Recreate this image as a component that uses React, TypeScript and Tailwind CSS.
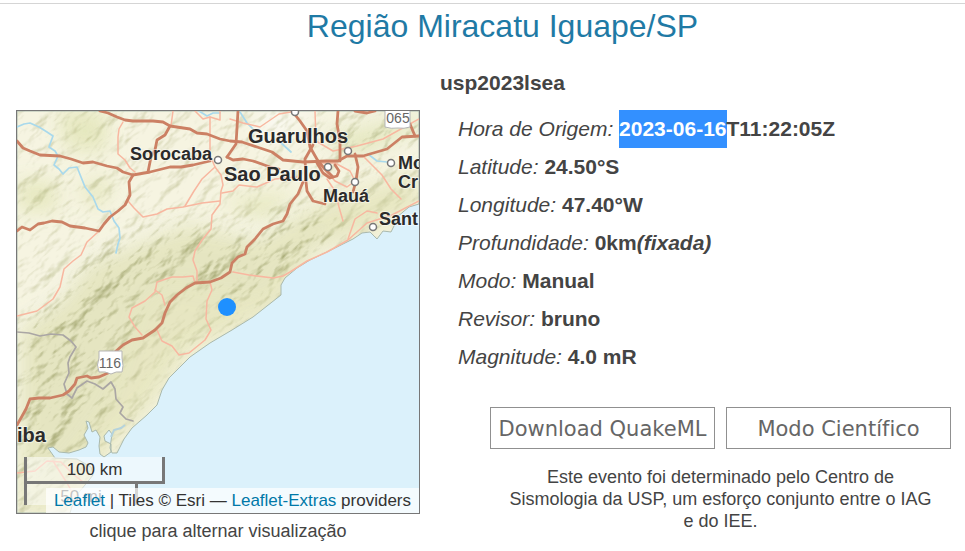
const MAIN_ROADS = [
  "M83 0L91 2L100 6L108 9L116 10L136 10L146 11L153 15L173 18L180 22L190 23L203 28L213 30L225 31L240 36L255 41L266 49L286 51L310 50L321 50L330 45L346 45L370 38L385 26L402 25",
  "M0 30L6 37L13 40L23 44L43 45L54 48L66 52L76 51L90 55L100 57L106 61L116 64L133 61L153 56L164 56L176 54L193 50",
  "M210 46L216 49L226 48L236 50L253 56L262 58",
  "M153 15L148 24L140 29L138 39L134 46L131 61",
  "M116 64L112 71L113 84L108 94L101 100L93 106L87 113L82 120L68 117L53 115L45 111L35 110L27 112L21 113L13 119L5 116L0 120",
  "M221 0L220 17L219 33L210 46",
  "M275 0L283 10L290 20L293 36L301 50L308 58L316 66",
  "M321 0L320 13L323 30L323 50",
  "M296 34L288 48L289 71L290 80L296 90L308 93",
  "M286 71L281 83L273 93L270 103L266 110L256 113L246 118L238 128L230 136L228 143L221 146L215 152L213 161L204 167L193 171L178 172L169 177L160 184L153 191L148 202L145 212L138 219L126 227L115 229L106 234L98 241",
  "M91 262L82 266L74 267L70 265L60 267L58 273L52 280L46 284L33 287L22 287L13 288L9 298L0 314",
  "M300 52L306 62L313 67L320 65L322 60L318 54",
  "M338 43L341 56L339 70L336 81",
  "M338 0L350 2L358 0M393 13L398 25",
];

const MINOR_ROADS = [
  "M156 0L154 15",
  "M106 11L102 18L101 26L101 43L108 49L113 57L118 61",
  "M111 90L117 97L126 106L140 103L150 98L166 96L185 92L203 90",
  "M168 95L177 80L185 68L198 56L193 44V6L186 8L178 0",
  "M193 6L203 9L203 0M198 56L204 64L206 74L204 80L203 93L195 104L194 118L185 129L178 140L176 149L180 160L180 172",
  "M81 121L70 131L64 144L56 150L47 158L43 176L36 188L20 200L0 205",
  "M178 172L176 165L166 166L155 166L140 171L138 181L128 190L115 197L112 206L118 216L125 224",
  "M138 179L145 184L148 194",
  "M140 219L145 230L155 235L162 244L172 242L188 229L194 219L189 208L190 190L195 179L193 171",
  "M216 161L232 164L256 167L266 165L273 161L290 150L310 141L331 129L350 112L375 104L402 90",
  "M310 68L318 80L322 96L326 110M331 128L338 108L350 100L360 102",
  "M213 8L226 12L243 16L262 3L280 0",
  "M205 82L216 80L222 74L240 76L258 68L280 66",
  "M298 0L299 30L316 40L340 35L366 28L402 8",
  "M301 52L318 70L330 76L338 70L333 60L318 52L301 52",
  "M346 45L365 64L374 78L384 88",
  "M0 362L18 360L30 350L44 351L56 363L66 371M36 350L50 372L60 390",
];

const RIVERS = [
  "M0 16L7 13L13 12L22 16L30 21L36 25L32 36L38 40L41 45L37 54L42 58L46 63L52 57L60 56L64 66L68 76L76 86L81 98L86 101L93 100L97 110L102 117L103 127L101 133L99 142",
  "M223 1L230 12L236 18M262 30L274 41",
  "M351 43L360 50L370 51",
  "M182 0L190 5L196 2L203 2",
];

const LAND =
  "M0 0H402V93L392 96L380 106L378 113L374 121L366 120L360 128L353 121L345 122L336 128L312 140L293 149L280 157L268 167L264 174L264 184L250 195L236 206L215 219L193 232L173 246L162 257L152 267L145 279L140 294L130 304L115 317L107 328L100 342L95 342L93 337L95 323L92 319L87 325L88 330L94 333L94 341L87 346L83 343L82 335L83 326L79 319L75 321L72 311L69 310L71 317L67 324L71 332L69 336L62 339L52 342L42 341L36 336L31 337L38 347L60 348L74 356L76 364L68 374L58 386L53 402H0Z";

const CITIES = [
  [278, 1],
  [201, 49],
  [311, 56],
  [331, 40],
  [374, 52],
  [338, 71],
  [356, 116],
];

const LABELS = [
  { x: 113, y: 49, size: 18, text: "Sorocaba" },
  { x: 231, y: 32, size: 20, text: "Guarulhos" },
  { x: 207, y: 70, size: 20, text: "Sao Paulo" },
  { x: 306, y: 91, size: 18, text: "Mauá" },
  { x: 381, y: 58, size: 18, text: "Mo" },
  { x: 381, y: 77, size: 18, text: "Cr" },
  { x: 362, y: 114, size: 18, text: "Sant" },
  { x: 0, y: 331, size: 20, text: "iba" },
];

function TerrainMap() {
  return (
    <svg
      viewBox="0 0 402 402"
      className="block h-full w-full"
      role="img"
      aria-label="Mapa da região do evento"
    >
      <defs>
        <clipPath id="land">
          <path d={LAND} />
        </clipPath>
        <filter id="soften" x="-20%" y="-20%" width="140%" height="140%">
          <feGaussianBlur stdDeviation="10" />
        </filter>
        <filter id="relief" x="0" y="0" width="100%" height="100%" colorInterpolationFilters="sRGB">
          <feTurbulence type="fractalNoise" baseFrequency="0.03 0.06" numOctaves="4" seed="7" />
          <feDiffuseLighting surfaceScale="5" diffuseConstant="1.18" lightingColor="#fff">
            <feDistantLight azimuth="250" elevation="60" />
          </feDiffuseLighting>
          <feComponentTransfer>
            <feFuncR type="linear" slope="0.42" intercept="0.57" />
            <feFuncG type="linear" slope="0.4" intercept="0.59" />
            <feFuncB type="linear" slope="0.6" intercept="0.38" />
          </feComponentTransfer>
          <feGaussianBlur stdDeviation="0.6" />
        </filter>
        <mask id="mountains" maskUnits="userSpaceOnUse" x="0" y="0" width="402" height="402">
          <rect width="402" height="402" fill="#777" />
          <path
            d="M0 215L40 190L70 150L120 128L160 115L230 122L270 100L330 108L300 142L262 160L255 185L200 180L150 172L120 200L110 235L90 290L60 330L0 402Z"
            fill="#fff"
            filter="url(#soften)"
          />
          <path d="M300 28L402 0V20L340 50Z M240 0H300L250 30Z" fill="#ddd" filter="url(#soften)" />
        </mask>
      </defs>

      <rect width="402" height="402" fill="#dbf1fb" />
      <path d={LAND} fill="#f0edcd" />
      <g clipPath="url(#land)">
        <path
          d="M0 215L40 190L70 150L130 125L170 110L240 125L280 100L402 60V100L300 142L262 200L173 240L130 300L90 340L60 402H0Z"
          fill="#e6e6c0"
          opacity="0.9"
          filter="url(#soften)"
        />
        <path
          d="M40 0H90V40H50Z M60 75L100 65L80 100Z M0 70H40V100H0Z M300 25L402 0V20L340 50Z M200 90L280 80L250 110Z"
          fill="#e2e5b8"
          opacity="0.8"
          filter="url(#soften)"
        />
        <g mask="url(#mountains)" className="mix-blend-multiply">
          <rect
            x="-120"
            y="-120"
            width="640"
            height="640"
            transform="rotate(-38 201 201)"
            filter="url(#relief)"
          />
        </g>
      </g>
      <path d={LAND} fill="none" stroke="#a9b9ae" strokeWidth="1" />
      <path d="M94 326L97 319L104 317L108 314" fill="none" stroke="#b5d3dc" strokeWidth="2" />

      <g fill="none" strokeLinejoin="round" strokeLinecap="round">
        {RIVERS.map((d) => (
          <path key={d} d={d} stroke="#a9d9ec" strokeWidth="1.7" />
        ))}
        <path
          d="M0 221L12 222L23 225L34 223L46 224L54 230L59 236L53 246L51 252L52 262L47 273L50 283L55 287L60 277L70 270L78 273L86 278L94 271L98 278L99 288L106 296L103 302L109 308L116 310"
          stroke="#aaa6a4"
          strokeWidth="1.7"
        />
        {MINOR_ROADS.map((d) => (
          <path key={d} d={d} stroke="#f8b7a0" strokeWidth="1.5" />
        ))}
        {MAIN_ROADS.map((d) => (
          <path key={d} d={d} stroke="#cc8064" strokeWidth="2.8" />
        ))}
      </g>

      {/* Highway shields */}
      <g fill="#fff" stroke="#b5b5b5" strokeWidth="1">
        <path d="M368 -2H393V16Q387 18 381 17Q374 18 368 16Z" />
        <path d="M82 240H105V247Q107 255 105 261Q99 260 94 263Q88 260 82 261Q79 254 82 247Z" />
      </g>
      <g
        fill="#666"
        fontFamily="Liberation Sans, Arial, sans-serif"
        fontSize="14"
        textAnchor="middle"
      >
        <text x="381" y="12">065</text>
        <text x="93" y="257">116</text>
      </g>

      {CITIES.map(([x, y]) => (
        <circle key={`${x}-${y}`} cx={x} cy={y} r="3.5" fill="#fff" stroke="#777" strokeWidth="1.5" />
      ))}
      <g
        fill="#2b2b2b"
        stroke="#fff"
        strokeOpacity="0.5"
        strokeWidth="2"
        paintOrder="stroke"
        fontFamily="Liberation Sans, Arial, sans-serif"
        fontWeight="bold"
      >
        {LABELS.map((label) => (
          <text key={label.text} x={label.x} y={label.y} fontSize={label.size}>
            {label.text}
          </text>
        ))}
      </g>

      {/* Epicenter */}
      <circle cx="210" cy="196" r="9" fill="#1e90ff" />
    </svg>
  );
}

function EventMap() {
  return (
    <figure className="w-[404px] shrink-0">
      <div className="relative aspect-square overflow-hidden border border-[#777]">
        <TerrainMap />
        <div className="absolute bottom-2 left-[7px] text-[17px] leading-[25px] text-[#333]">
          <div className="h-[27px] w-[141px] border-[3px] border-t-0 border-[#777] bg-white/50 text-center">
            100 km
          </div>
          <div className="h-[21px] w-[114px] border-x-[3px] border-[#777] bg-white/50 text-center">
            50 mi
          </div>
        </div>
        <div className="absolute right-0 bottom-0 bg-white/70 px-2 text-[17px] leading-[25px] whitespace-nowrap text-[#333]">
          <a href="#leaflet" className="text-[#0078a8]">Leaflet</a> | Tiles © Esri —{" "}
          <a href="#leaflet-extras" className="text-[#0078a8]">Leaflet-Extras</a> providers
        </div>
      </div>
      <figcaption className="pt-1 text-center text-lg leading-[26px]">
        clique para alternar visualização
      </figcaption>
    </figure>
  );
}

const details = [
  { label: "Latitude", value: "24.50°S" },
  { label: "Longitude", value: "47.40°W" },
  { label: "Profundidade", value: "0km", note: "(fixada)" },
  { label: "Modo", value: "Manual" },
  { label: "Revisor", value: "bruno" },
  { label: "Magnitude", value: "4.0 mR" },
];

const buttonClass =
  "h-[42px] flex-1 cursor-pointer border border-[#909090] bg-white pt-1 font-['DejaVu_Sans',Verdana,sans-serif] text-[21px] whitespace-nowrap text-[#666] [font-variant-ligatures:none]";

export default function App() {
  return (
    <main className="bg-white pt-[3px] font-['Liberation_Sans',Arial,sans-serif] text-[#444]">
      <header className="border-t border-[#d5d5d5] pl-10 text-center">
        <h1 className="pt-0.5 text-[32px] leading-10 text-[#1f7aa5]">Região Miracatu Iguape/SP</h1>
        <h2 className="pt-[22px] pb-3 text-[21px] leading-[30px] font-bold">usp2023lsea</h2>
      </header>

      <div className="flex pr-[14px] pl-4">
        <EventMap />

        <section className="flex-1 pl-[38px]">
          <ul className="text-[21px] leading-[38px]">
            <li>
              <em>Hora de Origem:</em>{" "}
              <b>
                <mark className="inline-block bg-[#3390ff] text-white">2023-06-16</mark>T11:22:05Z
              </b>
            </li>
            {details.map((item) => (
              <li key={item.label}>
                <em>{item.label}:</em>{" "}
                <b>
                  {item.value}
                  {item.note && <i>{item.note}</i>}
                </b>
              </li>
            ))}
          </ul>

          <div className="pt-[31px] pl-8">
            <div className="flex gap-[11px]">
              <button type="button" className={buttonClass}>Download QuakeML</button>
              <button type="button" className={buttonClass}>Modo Científico</button>
            </div>
            <p className="px-4 pt-[17px] text-center text-lg leading-[22px]">
              Este evento foi determinado pelo Centro de Sismologia da USP, um esforço conjunto entre
              o IAG e do IEE.
            </p>
          </div>
        </section>
      </div>
    </main>
  );
}
